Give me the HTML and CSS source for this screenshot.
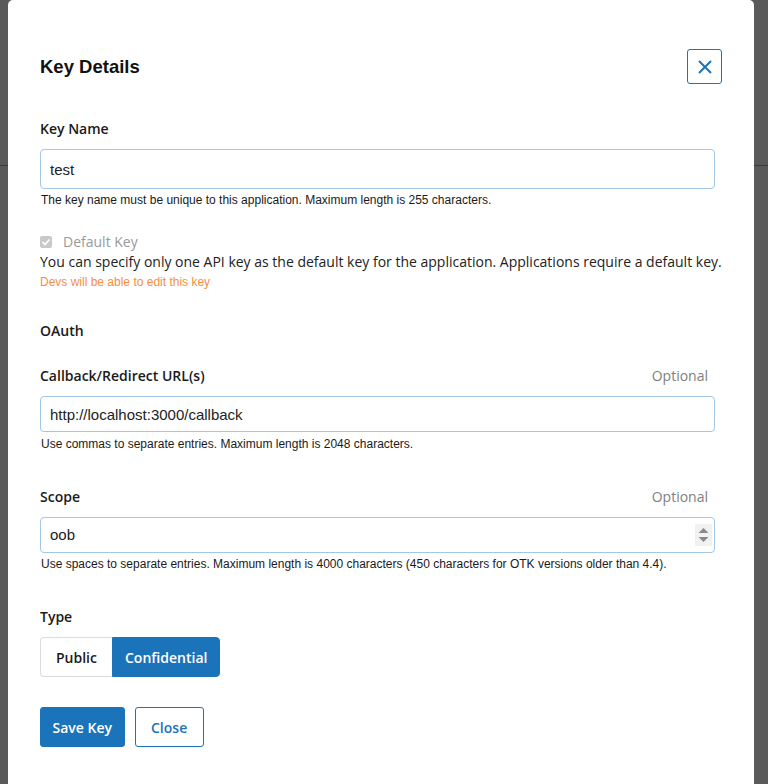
FILE: index.html
```html
<!DOCTYPE html>
<html lang="en">
<head>
<meta charset="utf-8">
<title>Key Details</title>
<link rel="stylesheet" href="styles.css">
</head>
<body>
<div class="modal">
  <div class="modal-header">
    <h2 class="title">Key Details</h2>
    <button class="icon-close" aria-label="Close">
      <svg width="16" height="16" viewBox="0 0 16 16"><path d="M2 2 L14 14 M14 2 L2 14" stroke="#1b74b9" stroke-width="2" fill="none"/></svg>
    </button>
  </div>

  <div class="label row-keyname">Key Name</div>
  <input class="field field-tall" type="text" value="test">
  <div class="help">The key name must be unique to this application. Maximum length is 255 characters.</div>

  <div class="check-row">
    <span class="checkbox"><svg width="10" height="10" viewBox="0 0 10 10"><path d="M1.5 5 L4 7.5 L8.5 2.5" stroke="#fff" stroke-width="1.6" fill="none"/></svg></span>
    <span class="check-label">Default Key</span>
  </div>
  <div class="desc">You can specify only one API key as the default key for the application. Applications require a default key.</div>
  <div class="warn">Devs will be able to edit this key</div>

  <div class="label section">OAuth</div>

  <div class="label-row gap-callback">
    <span class="label">Callback/Redirect URL(s)</span>
    <span class="optional">Optional</span>
  </div>
  <input class="field" type="text" value="http://localhost:3000/callback">
  <div class="help help-b">Use commas to separate entries. Maximum length is 2048 characters.</div>

  <div class="label-row gap-scope">
    <span class="label">Scope</span>
    <span class="optional">Optional</span>
  </div>
  <div class="field scope">
    <span class="scope-text">oob</span>
    <span class="spinner">
      <svg width="17" height="22" viewBox="0 0 17 22"><rect width="17" height="22" fill="#f1f1f1"/><path d="M3.5 9 L8.5 4 L13.5 9 Z" fill="#8a8a8a"/><path d="M3.5 13 L8.5 18 L13.5 13 Z" fill="#8a8a8a"/></svg>
    </span>
  </div>
  <div class="help">Use spaces to separate entries. Maximum length is 4000 characters (450 characters for OTK versions older than 4.4).</div>

  <div class="label gap-type">Type</div>
  <div class="toggle">
    <button class="seg seg-off">Public</button>
    <button class="seg seg-on">Confidential</button>
  </div>

  <div class="actions">
    <button class="btn btn-primary">Save Key</button>
    <button class="btn btn-outline">Close</button>
  </div>
</div>
</body>
</html>
```
FILE: styles.css
```css
html, body {
  margin: 0;
  padding: 0;
}
body {
  width: 768px;
  height: 784px;
  overflow: hidden;
  background:
    linear-gradient(to bottom, transparent 165px, #3a3a3a 165px, #3a3a3a 166px, transparent 166px),
    #5a5a5a;
  font-family: "Open Sans", "Liberation Sans", sans-serif;
  color: #222;
}
.modal {
  margin: 0 14px 0 8px;
  background: #fff;
  border-radius: 5px 5px 0 0;
  padding: 49px 32px 60px 32px;
  min-height: 800px;
  box-sizing: border-box;
}
.modal-header {
  display: flex;
  align-items: center;
  justify-content: space-between;
  height: 35px;
}
.title {
  margin: 0;
  font-family: "Liberation Sans", Arial, sans-serif;
  font-weight: 700;
  font-size: 18.5px;
  color: #111;
}
.icon-close {
  width: 35px;
  height: 35px;
  box-sizing: border-box;
  border: 1px solid #1b74b9;
  border-radius: 3px;
  background: #fff;
  padding: 0;
  display: flex;
  align-items: center;
  justify-content: center;
}
.label {
  font-size: 14px;
  font-weight: 600;
  line-height: 20px;
  color: #1a1a1a;
}
.row-keyname {
  margin-top: 35px;
}
.field {
  display: block;
  box-sizing: border-box;
  width: calc(100% - 7px);
  height: 36px;
  margin: 10px 0 0 0;
  border: 1px solid #a3c7e6;
  border-radius: 4px;
  padding: 0 9px;
  font-family: "Liberation Sans", Arial, sans-serif;
  font-size: 15px;
  color: #222;
  background: #fff;
  outline: none;
}
.field-tall {
  height: 40px;
}
.help {
  margin-top: 4px;
  font-family: "Liberation Sans", Arial, sans-serif;
  font-size: 12px;
  line-height: 14px;
  color: #1a1a1a;
  padding-left: 1px;
}
.help-b {
  margin-top: 5px;
}
.check-row {
  margin-top: 25px;
  display: flex;
  align-items: center;
  height: 20px;
}
.checkbox {
  width: 12px;
  height: 12px;
  border-radius: 2px;
  background: #c9c9c9;
  display: flex;
  align-items: center;
  justify-content: center;
  margin-right: 11px;
}
.check-label {
  font-size: 14px;
  color: #9a9a9a;
  line-height: 20px;
}
.desc {
  font-size: 14px;
  line-height: 20px;
  color: #222;
}
.warn {
  font-family: "Liberation Sans", Arial, sans-serif;
  font-size: 12px;
  line-height: 20px;
  color: #f68e3e;
}
.section {
  margin-top: 29px;
  font-weight: 600;
}
.label-row {
  display: flex;
  justify-content: space-between;
  width: calc(100% - 14px);
  line-height: 20px;
}
.gap-callback {
  margin-top: 25px;
}
.gap-scope {
  margin-top: 36px;
}
.optional {
  font-size: 14px;
  color: #808080;
}
.scope {
  display: flex;
  align-items: center;
  justify-content: space-between;
  padding-right: 2px;
}
.scope-text {
  line-height: 20px;
}
.spinner {
  display: flex;
}
.gap-type {
  margin-top: 36px;
}
.toggle {
  display: flex;
  margin-top: 10px;
}
.seg {
  height: 40px;
  box-sizing: border-box;
  font-family: "Open Sans", sans-serif;
  font-size: 14px;
  font-weight: 600;
  margin: 0;
}
.seg-off {
  background: #fff;
  color: #1a1a1a;
  border: 1px solid #dcdcdc;
  border-right: none;
  border-radius: 4px 0 0 4px;
  padding: 0 15px 0 15px;
}
.seg-on {
  background: #1b74b9;
  color: #fff;
  border: 1px solid #1b74b9;
  border-radius: 0 4px 4px 0;
  padding: 0 12px;
}
.actions {
  display: flex;
  gap: 10px;
  margin-top: 30px;
}
.btn {
  height: 40px;
  box-sizing: border-box;
  font-family: "Open Sans", sans-serif;
  font-size: 14px;
  font-weight: 600;
  border-radius: 3px;
  margin: 0;
}
.btn-primary {
  background: #1b74b9;
  color: #fff;
  border: 1px solid #1b74b9;
  padding: 0 11.5px;
}
.btn-outline {
  background: #fff;
  color: #1b74b9;
  border: 1px solid #1b74b9;
  padding: 0 15.5px;
}
```
